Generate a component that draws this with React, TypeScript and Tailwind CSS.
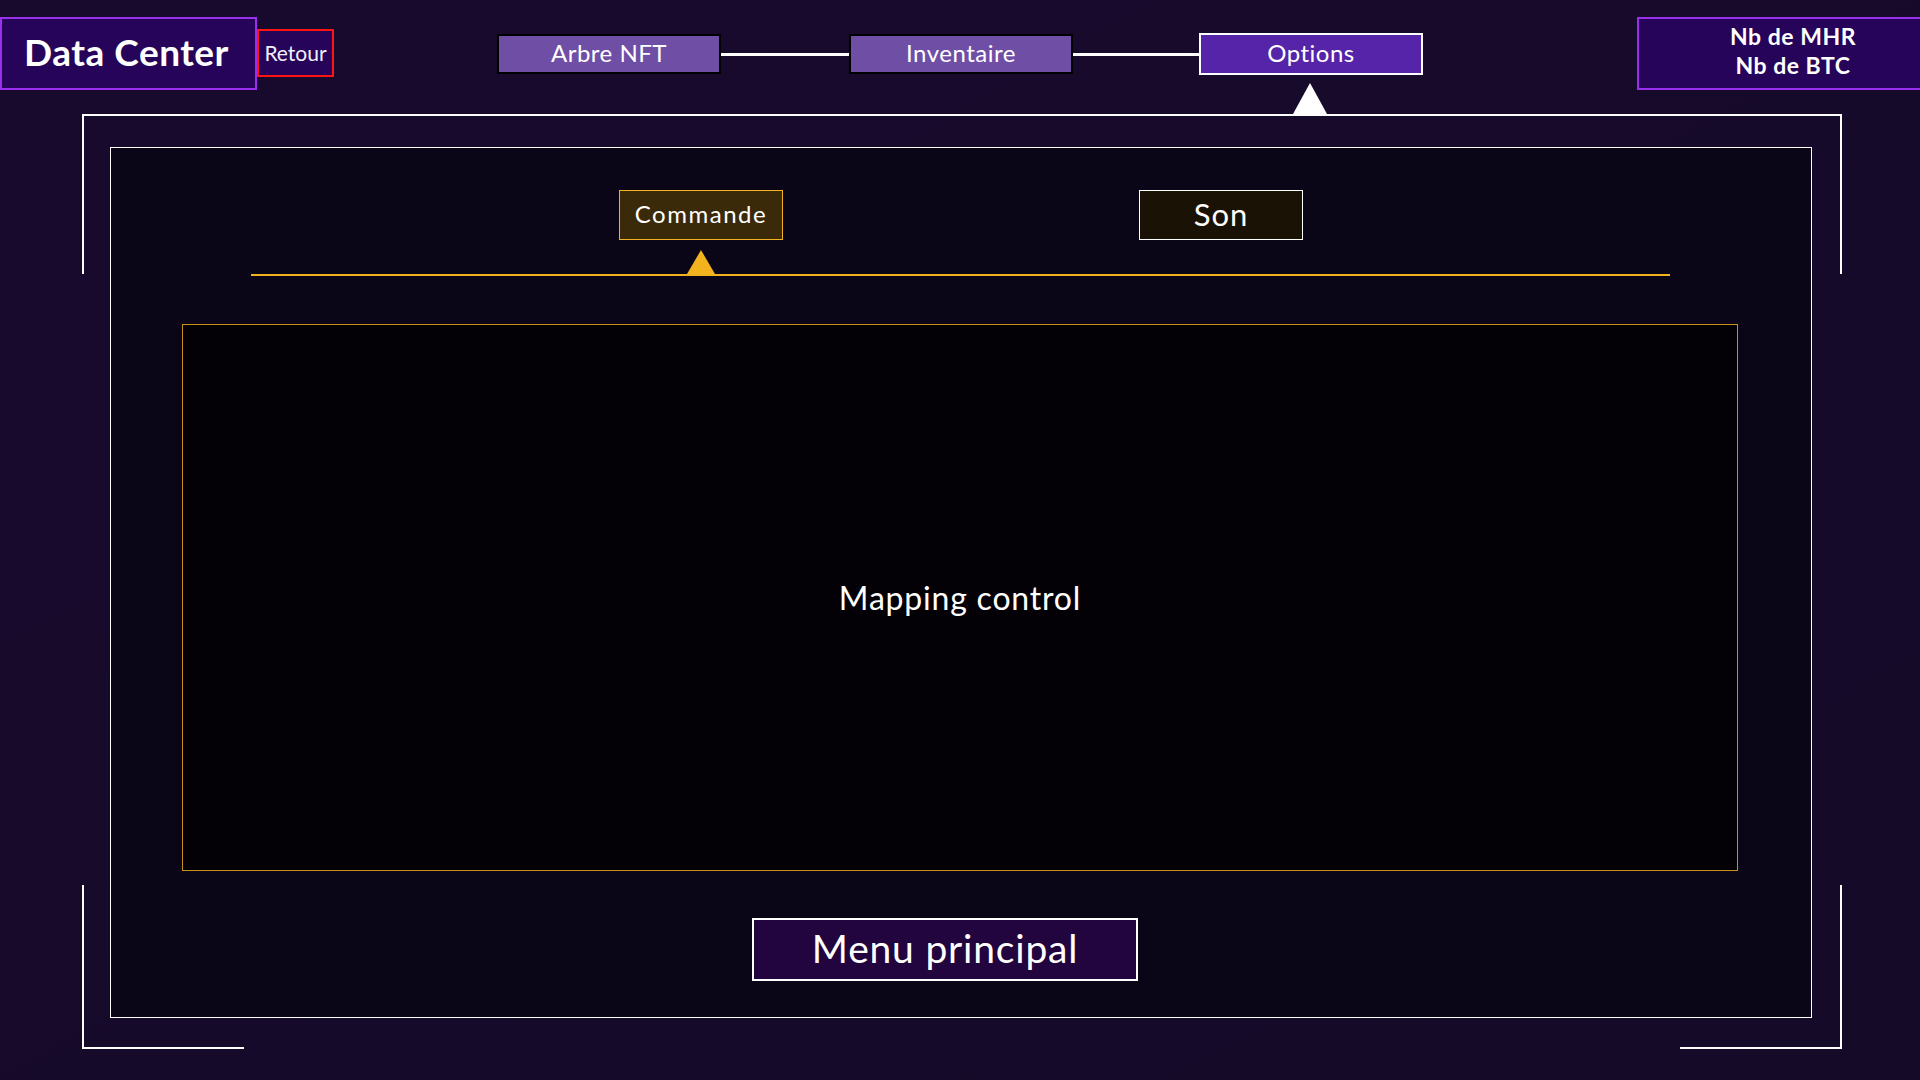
import type { ReactNode } from "react"

const font = { fontFamily: "Lato, 'Noto Sans', sans-serif" }

function NavBox({ children, active }: { children: ReactNode; active?: boolean }) {
  return (
    <div
      className={[
        "flex w-[224px] items-center justify-center pb-[3px] text-[24px] tracking-[0.5px] text-white",
        active ? "h-[42px] border-2 border-white bg-[#5524a8]" : "h-[40px] border-2 border-black bg-[#6f4ea6]",
      ].join(" ")}
    >
      {children}
    </div>
  )
}

function Rail() {
  return (
    <div className="flex w-[2px] flex-col">
      <div className="h-[158px] bg-white" />
      <div className="flex-1" />
      <div className="h-[162px] bg-white" />
    </div>
  )
}

export default function App() {
  return (
    <div
      className="h-[1080px] w-[1920px] overflow-hidden bg-gradient-to-br from-[#180a2d] to-[#150a28]"
      style={font}
    >
      {/* Header */}
      <div className="flex h-[114px] items-start">
        <div className="mt-[17px] flex h-[73px] w-[257px] shrink-0 items-center justify-center border-2 border-[#9a30ee] bg-[#26045a] pb-[4px] pr-[4px] text-[37px] font-bold tracking-[0.5px] text-white">
          Data Center
        </div>
        <div className="mt-[29px] flex h-[48px] w-[77px] shrink-0 items-center justify-center border-2 border-[#ff1414] bg-[#26045a] pb-[1px] text-[21px] text-[#f2eefa]">
          Retour
        </div>

        <div className="ml-[163px] mt-[33px] flex items-center">
          <NavBox>Arbre NFT</NavBox>
          <div className="h-[3px] w-[128px] bg-white" />
          <NavBox>Inventaire</NavBox>
          <div className="h-[3px] w-[126px] bg-white" />
          <div className="relative">
            <NavBox active>Options</NavBox>
            <div className="absolute left-[94px] top-[50px] h-0 w-0 border-x-[17px] border-b-[31px] border-x-transparent border-b-white" />
          </div>
        </div>

        <div className="ml-[214px] mt-[17px] flex h-[73px] w-[312px] shrink-0 flex-col items-center justify-center border-2 border-[#9a30ee] bg-[#26045a] pb-[6px] text-[23px] font-bold leading-[29px] tracking-[0.5px] text-white">
          <div>Nb de MHR</div>
          <div>Nb de BTC</div>
        </div>
      </div>

      {/* Frame */}
      <div className="ml-[82px] flex h-[935px] w-[1760px] flex-col">
        <div className="h-[2px] bg-white" />
        <div className="flex flex-1">
          <Rail />
          <div className="flex-1 pb-[29px] pl-[26px] pr-[28px] pt-[31px]">
            <div className="flex h-full flex-col border border-white bg-[#0b0518]">
              {/* Tabs */}
              <div className="mt-[42px] flex">
                <div className="ml-[508px] flex h-[50px] w-[164px] items-center justify-center border-[1.5px] border-[#f2b31e] bg-[#3a2a09] pb-[2px] text-[24px] tracking-[1.5px] text-white">
                  Commande
                </div>
                <div className="ml-[356px] flex h-[50px] w-[164px] items-center justify-center border-[1.5px] border-white bg-[#1a1204] pb-[2px] text-[31px] tracking-[1px] text-white">
                  Son
                </div>
              </div>
              <div className="ml-[576px] mt-[10px] h-0 w-0 border-x-[14px] border-b-[24px] border-x-transparent border-b-[#f2b31e]" />
              <div className="ml-[140px] h-[2px] w-[1419px] bg-[#f2b31e]" />

              {/* Mapping */}
              <div className="ml-[71px] mt-[48px] flex h-[547px] w-[1556px] items-center justify-center border border-[#c8921a] bg-[#030106] text-[32px] tracking-[0.8px] text-white">
                Mapping control
              </div>

              {/* Menu */}
              <div className="ml-[641px] mt-[47px] flex h-[63px] w-[386px] items-center justify-center border-2 border-white bg-[#22053f] pb-[3px] text-[39px] tracking-[0.8px] text-white">
                Menu principal
              </div>
            </div>
          </div>
          <Rail />
        </div>
        <div className="flex h-[2px]">
          <div className="w-[162px] bg-white" />
          <div className="flex-1" />
          <div className="w-[162px] bg-white" />
        </div>
      </div>
    </div>
  )
}
